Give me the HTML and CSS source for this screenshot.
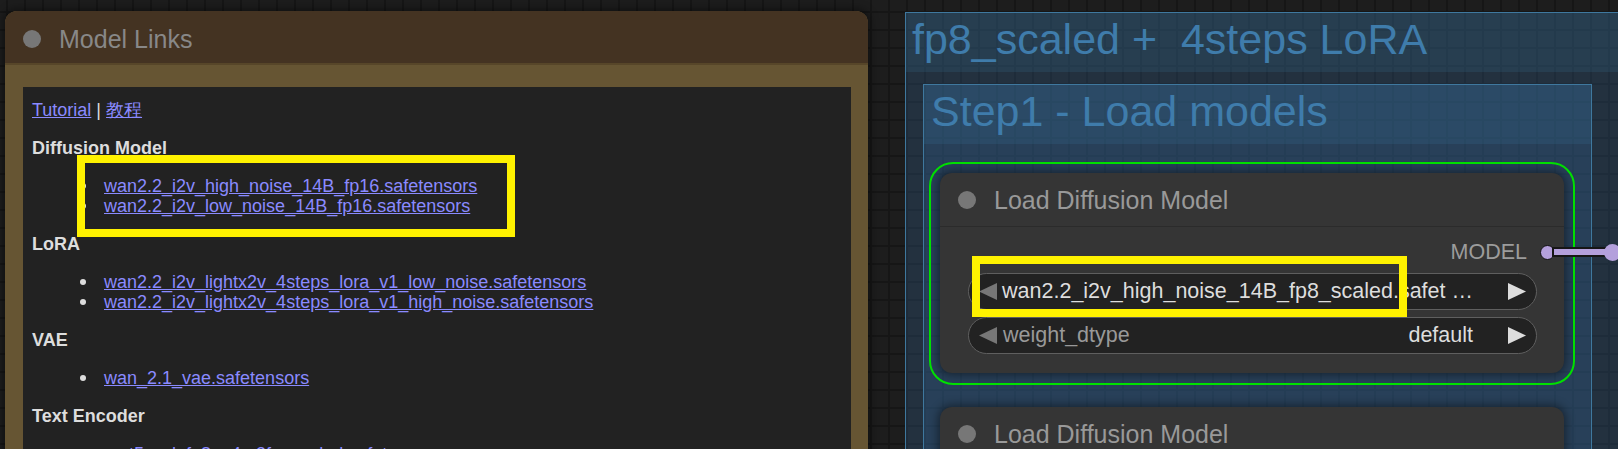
FILE: index.html
```html
<!DOCTYPE html>
<html>
<head>
  <title>Model Links</title>
  <link rel="stylesheet" href="styles.css">
</head>
<body>
  <div class="canvas">

    <!-- groups sit under the nodes -->
    <div class="group group-outer">
      <div class="group-title">fp8_scaled +  4steps LoRA</div>
    </div>
    <div class="group group-inner">
      <div class="group-title">Step1 - Load models</div>
    </div>

    <div class="node links-node">
      <div class="node-title"><span class="dot"></span>Model Links</div>
      <div class="links-body">
        <div class="md">
          <p><a href="#">Tutorial</a> | <a href="#">教程</a></p>
          <h4>Diffusion Model</h4>
          <ul>
            <li><a href="#">wan2.2_i2v_high_noise_14B_fp16.safetensors</a></li>
            <li><a href="#">wan2.2_i2v_low_noise_14B_fp16.safetensors</a></li>
          </ul>
          <h4>LoRA</h4>
          <ul>
            <li><a href="#">wan2.2_i2v_lightx2v_4steps_lora_v1_low_noise.safetensors</a></li>
            <li><a href="#">wan2.2_i2v_lightx2v_4steps_lora_v1_high_noise.safetensors</a></li>
          </ul>
          <h4>VAE</h4>
          <ul>
            <li><a href="#">wan_2.1_vae.safetensors</a></li>
          </ul>
          <h4>Text Encoder</h4>
          <ul>
            <li><a href="#">umt5_xxl_fp8_e4m3fn_scaled.safetensors</a></li>
          </ul>
        </div>
      </div>
    </div>

    <div class="node load-node selected">
      <div class="node-title"><span class="dot"></span>Load Diffusion Model</div>
      <div class="load-body">
        <div class="output-row"><span>MODEL</span><span class="slot"></span></div>
        <div class="widget">
          <svg class="arrow" width="18" height="17" viewBox="0 0 18 17"><polygon points="18,0 18,17 0,8.5" fill="#777"/></svg>
          <span class="w-value">wan2.2_i2v_high_noise_14B_fp8_scaled.safet …</span>
          <svg class="arrow" width="18" height="17" viewBox="0 0 18 17"><polygon points="0,0 18,8.5 0,17" fill="#ddd"/></svg>
        </div>
        <div class="widget">
          <svg class="arrow" width="18" height="17" viewBox="0 0 18 17"><polygon points="18,0 18,17 0,8.5" fill="#777"/></svg>
          <span class="w-label">weight_dtype</span>
          <span class="w-value">default</span>
          <svg class="arrow" width="18" height="17" viewBox="0 0 18 17"><polygon points="0,0 18,8.5 0,17" fill="#ddd"/></svg>
        </div>
      </div>
    </div>

    <div class="node load-node second">
      <div class="node-title"><span class="dot"></span>Load Diffusion Model</div>
    </div>

    <div class="link"></div>
    <div class="link-marker"></div>

    <!-- annotation boxes -->
    <div class="mark mark-links"></div>
    <div class="mark mark-widget"></div>
  </div>
</body>
</html>
```

FILE: styles.css
```css
:root {
  --grid: #1d1d1d;
  --grid-line: #161616;
  --group: #3f789e;
  --group-text: #3f7cab;
  --node: #353535;
  --link: #b4a0dc;
  --mark: #fff200;
}

body {
  margin: 0;
  background: var(--grid);
  overflow: hidden;
  font-family: "Liberation Sans", Arial, sans-serif;
}

.canvas {
  position: relative;
  width: 1618px;
  height: 449px;
  overflow: hidden;
  background-color: var(--grid);
  background-image:
    linear-gradient(var(--grid-line) 2px, transparent 2px),
    linear-gradient(90deg, var(--grid-line) 2px, transparent 2px);
  background-size: 18px 18px;
  background-position: 6px 11px;
}

/* Groups */
.group {
  position: absolute;
  box-sizing: border-box;
  border: 1px solid var(--group);
  background: rgba(57, 110, 167, 0.25);
}

.group-title {
  height: 59px;
  line-height: 53px;
  font-size: 43px;
  color: var(--group-text);
  background: rgba(63, 120, 158, 0.18);
  white-space: pre;
}

.group-outer {
  left: 905px;
  top: 12px;
  width: 760px;
  height: 500px;
}

.group-outer .group-title {
  padding-left: 6px;
}

.group-inner {
  left: 923px;
  top: 84px;
  width: 669px;
  height: 450px;
}

.group-inner .group-title {
  padding-left: 7px;
}

/* Nodes */
.node {
  position: absolute;
  border-radius: 12px;
  box-shadow: 0 0 10px 2px rgba(0, 0, 0, 0.45);
}

.node-title {
  box-sizing: border-box;
  height: 54px;
  line-height: 54px;
  padding-left: 18px;
  display: flex;
  align-items: center;
  gap: 18px;
  font-size: 25px;
  border-radius: 12px 12px 0 0;
}

.dot {
  width: 18px;
  height: 18px;
  border-radius: 50%;
  background: #777;
  flex: none;
}

.links-node {
  left: 5px;
  top: 11px;
  width: 863px;
  height: 520px;
  background: #665533;
}

.links-node .node-title {
  padding-top: 3px;
  background: #443322;
  color: #888;
  border-bottom: 2px solid #574629;
}

.links-body {
  padding: 22px 17px 0 18px;
}

.md {
  background: #222;
  color: #ddd;
  font-size: 18px;
  line-height: 20px;
  padding: 13px 9px;
  height: 600px;
}

.md p,
.md h4,
.md ul {
  margin: 18px 0;
}

.md > :first-child {
  margin-top: 0;
}

.md h4 {
  font-size: 18px;
  font-weight: bold;
}

.md ul {
  list-style: none;
  padding-left: 72px;
}

.md li {
  position: relative;
}

/* bullet sits a little further from the text than the default marker */
.md li::before {
  content: "";
  position: absolute;
  left: -24px;
  top: 7px;
  width: 6px;
  height: 6px;
  border-radius: 50%;
  background: #ddd;
}

.md a {
  color: #8a8aff;
}

.load-node {
  left: 940px;
  top: 173px;
  width: 624px;
  height: 200px;
  background: var(--node);
}

.load-node .node-title {
  color: #999;
  border-bottom: 1px solid #2b2b2b;
}

.selected::before {
  content: "";
  position: absolute;
  top: -11px;
  left: -11px;
  right: -11px;
  bottom: -12px;
  border: 2px solid #00e000;
  border-radius: 24px;
}

.load-body {
  padding: 13px 27px 0 28px;
}

.output-row {
  height: 24px;
  display: flex;
  justify-content: flex-end;
  align-items: center;
  gap: 13px;
  margin: 0 -18px 9px 0;
  font-size: 21.5px;
  color: #9c9c9c;
}

.slot {
  width: 13px;
  height: 13px;
  border-radius: 50%;
  background: var(--link);
  border: 1px solid #111;
}

.widget {
  box-sizing: border-box;
  height: 37px;
  border: 1px solid #5f5f5f;
  border-radius: 19px;
  background: #222;
  display: flex;
  align-items: center;
  padding: 0 10px;
  margin-bottom: 7px;
  font-size: 21.5px;
  white-space: nowrap;
}

.arrow {
  flex: none;
}

.w-label {
  margin-left: 6px;
  color: #999;
}

.w-value {
  margin-left: auto;
  margin-right: 35px;
  color: #ddd;
}

.second {
  top: 407px;
  height: 120px;
}

/* Link leaving the MODEL slot */
.link {
  position: absolute;
  left: 1554px;
  top: 249px;
  width: 58px;
  height: 6px;
  background: var(--link);
  box-shadow: 0 0 0 2px #161616;
}

.link-marker {
  position: absolute;
  left: 1604px;
  top: 244px;
  width: 17px;
  height: 17px;
  border-radius: 50%;
  background: var(--link);
}

/* Annotations */
.mark {
  position: absolute;
  box-sizing: border-box;
  border: 8px solid var(--mark);
}

.mark-links {
  left: 77px;
  top: 155px;
  width: 438px;
  height: 82px;
}

.mark-widget {
  left: 972px;
  top: 256px;
  width: 435px;
  height: 61px;
}
```
